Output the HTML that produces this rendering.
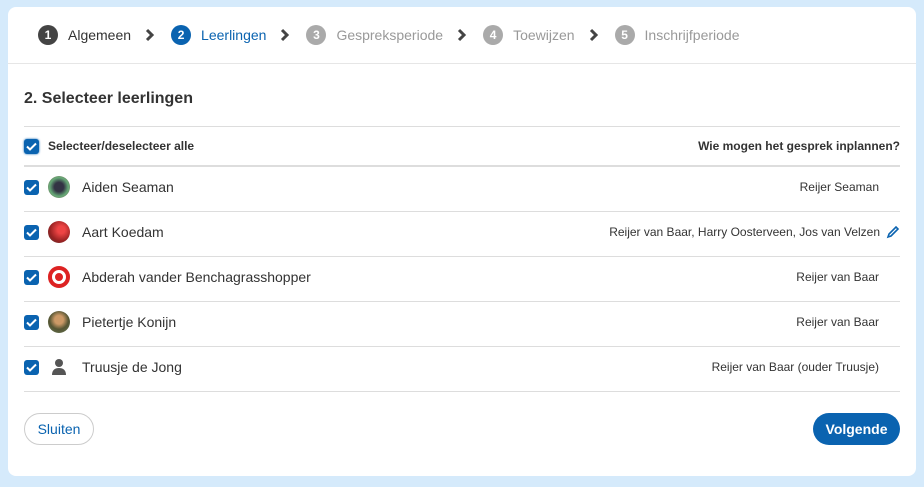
<!DOCTYPE html>
<html><head><style>
body{margin:0;width:924px;height:487px;background:#d5eafb;font-family:"Liberation Sans",sans-serif;color:#333;position:relative;overflow:hidden}
.card{position:absolute;left:8px;top:7px;width:908px;height:469px;background:#fff;border-radius:8px}
.steps{position:absolute;left:30px;top:11px;height:34px;display:flex;align-items:center;font-size:14px}
.st{display:flex;align-items:center;margin-right:10px}
.n{width:20px;height:20px;border-radius:50%;color:#fff;font-size:12px;font-weight:bold;display:flex;align-items:center;justify-content:center;margin-right:10px}
.chev{margin:0 16px 0 4px;width:10px;height:14px}
.sep{position:absolute;left:0;right:0;top:56px;border-top:1px solid #e6e6e6}
h2{position:absolute;left:16px;top:83px;margin:0;font-size:16px;font-weight:bold;color:#333}
.line{position:absolute;left:16px;width:876px;border-top:1px solid #ddd}
.row{position:absolute;left:16px;width:876px;display:flex;align-items:center;font-size:14px}
.cb{width:15px;height:15px;background:#0a63b0;border-radius:3px;display:flex;align-items:center;justify-content:center;margin-right:9px}
.av{width:22px;height:22px;border-radius:50%;margin-right:12px}
.r{margin-left:auto;font-size:12px;margin-right:21px}
.btn{position:absolute;top:406px;height:32px;border-radius:16px;font-size:14px;display:flex;align-items:center;justify-content:center}
</style></head><body>
<div class="card">
<div class="steps">
<div class="st"><div class="n" style="background:#444">1</div><span>Algemeen</span></div>
<svg class="chev" viewBox="0 0 10 14"><path d="M2 2l5 5-5 5" stroke="#444" stroke-width="3" fill="none"/></svg>
<div class="st"><div class="n" style="background:#0a63b0">2</div><span style="color:#0a63b0">Leerlingen</span></div>
<svg class="chev" viewBox="0 0 10 14"><path d="M2 2l5 5-5 5" stroke="#444" stroke-width="3" fill="none"/></svg>
<div class="st"><div class="n" style="background:#aaa">3</div><span style="color:#999">Gespreksperiode</span></div>
<svg class="chev" viewBox="0 0 10 14"><path d="M2 2l5 5-5 5" stroke="#444" stroke-width="3" fill="none"/></svg>
<div class="st"><div class="n" style="background:#aaa">4</div><span style="color:#999">Toewijzen</span></div>
<svg class="chev" viewBox="0 0 10 14"><path d="M2 2l5 5-5 5" stroke="#444" stroke-width="3" fill="none"/></svg>
<div class="st"><div class="n" style="background:#aaa">5</div><span style="color:#999">Inschrijfperiode</span></div>
</div>
<div class="sep"></div>
<h2>2. Selecteer leerlingen</h2>
<div class="line" style="top:119px"></div>
<div class="row" style="top:130px;height:18px;font-size:12px;font-weight:bold"><div class="cb" style="box-shadow:0 0 2px #0a63b0"><svg width="11" height="9" viewBox="0 0 11 9"><path d="M1 4.5l3 3 6-6" stroke="#fff" stroke-width="2" fill="none"/></svg></div>Selecteer/deselecteer alle<span style="margin-left:auto">Wie mogen het gesprek inplannen?</span></div>
<div class="line" style="top:158px;border-top:2px solid #ddd"></div>
<div class="row" style="top:169px;height:22px"><div class="cb"><svg width="11" height="9" viewBox="0 0 11 9"><path d="M1 4.5l3 3 6-6" stroke="#fff" stroke-width="2" fill="none"/></svg></div><div class="av" style="background:radial-gradient(circle,#334 30%,#6a7 60%,#855)"></div>Aiden Seaman<span class="r">Reijer Seaman</span></div>
<div class="line" style="top:204px"></div>
<div class="row" style="top:214px;height:22px"><div class="cb"><svg width="11" height="9" viewBox="0 0 11 9"><path d="M1 4.5l3 3 6-6" stroke="#fff" stroke-width="2" fill="none"/></svg></div><div class="av" style="background:radial-gradient(circle at 60% 40%,#e44 20%,#922 60%,#533)"></div>Aart Koedam<span class="r" style="margin-right:0">Reijer van Baar, Harry Oosterveen, Jos van Velzen</span><svg style="margin-left:6px" width="14" height="14" viewBox="0 0 14 14"><path d="M2 12l1-3 7-7 2 2-7 7z" stroke="#0a63b0" stroke-width="1.6" fill="none"/></svg></div>
<div class="line" style="top:249px"></div>
<div class="row" style="top:259px;height:22px"><div class="cb"><svg width="11" height="9" viewBox="0 0 11 9"><path d="M1 4.5l3 3 6-6" stroke="#fff" stroke-width="2" fill="none"/></svg></div><div class="av" style="background:#d22;box-shadow:inset 0 0 0 4px #d22,inset 0 0 0 7px #fff"></div>Abderah vander Benchagrasshopper<span class="r">Reijer van Baar</span></div>
<div class="line" style="top:294px"></div>
<div class="row" style="top:304px;height:22px"><div class="cb"><svg width="11" height="9" viewBox="0 0 11 9"><path d="M1 4.5l3 3 6-6" stroke="#fff" stroke-width="2" fill="none"/></svg></div><div class="av" style="background:radial-gradient(circle at 50% 40%,#c96 25%,#553 55%,#675)"></div>Pietertje Konijn<span class="r">Reijer van Baar</span></div>
<div class="line" style="top:339px"></div>
<div class="row" style="top:349px;height:22px"><div class="cb"><svg width="11" height="9" viewBox="0 0 11 9"><path d="M1 4.5l3 3 6-6" stroke="#fff" stroke-width="2" fill="none"/></svg></div><svg class="av" viewBox="0 0 22 22" style="border-radius:0"><circle cx="11" cy="7" r="4" fill="#555"/><path d="M4 19c0-5 3-7 7-7s7 2 7 7z" fill="#555"/></svg>Truusje de Jong<span class="r">Reijer van Baar (ouder Truusje)</span></div>
<div class="line" style="top:384px"></div>
<div class="btn" style="left:16px;width:70px;border:1px solid #ccc;color:#0a63b0;box-sizing:border-box">Sluiten</div>
<div class="btn" style="left:805px;width:87px;background:#0a63b0;color:#fff;font-weight:bold">Volgende</div>
</div>
</body></html>
